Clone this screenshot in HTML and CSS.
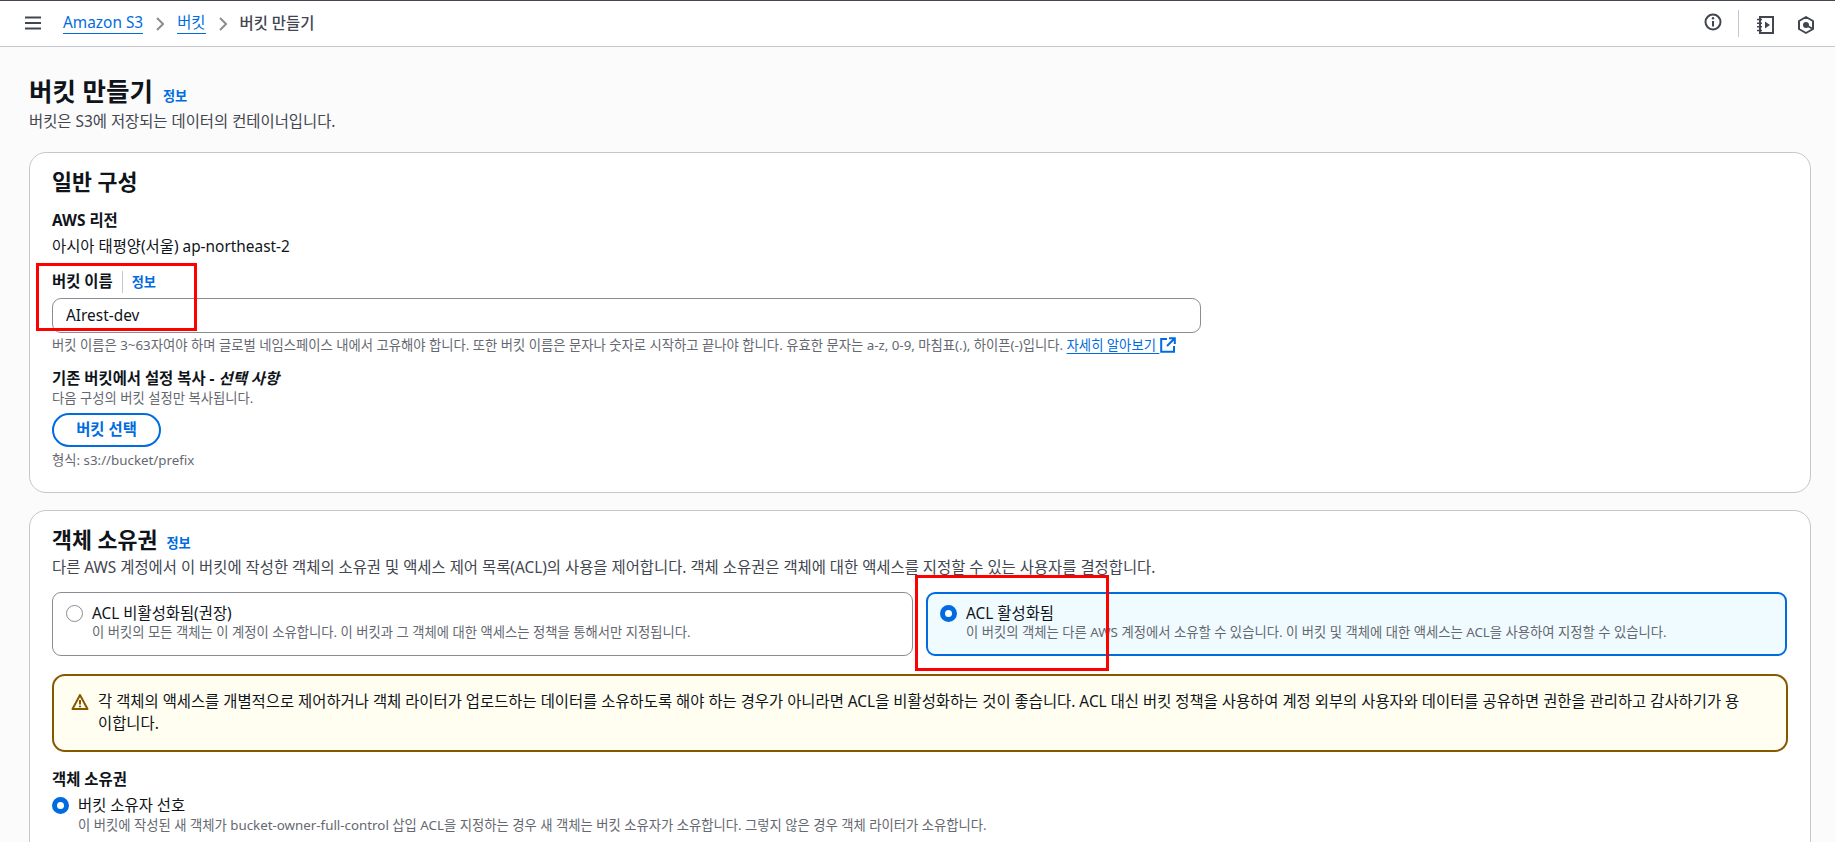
FILE: index.html
```html
<!DOCTYPE html>
<html lang="ko">
<head>
<meta charset="utf-8">
<title>버킷 만들기</title>
<link rel="stylesheet" href="styles.css">
</head>
<body>
<header class="topbar">
  <svg class="menu" width="16" height="14" viewBox="0 0 16 14"><path d="M0 1.5h16M0 7h16M0 12.5h16" stroke="#424650" stroke-width="2" fill="none"/></svg>
  <nav class="crumbs">
    <a class="link" href="#">Amazon S3</a>
    <svg class="chev" width="8" height="14" viewBox="0 0 8 14"><path d="M1 1l6 6-6 6" stroke="#8c8c94" stroke-width="2" fill="none"/></svg>
    <a class="link" href="#">버킷</a>
    <svg class="chev" width="8" height="14" viewBox="0 0 8 14"><path d="M1 1l6 6-6 6" stroke="#8c8c94" stroke-width="2" fill="none"/></svg>
    <span class="current">버킷 만들기</span>
  </nav>
  <div class="tools">
    <svg class="tool-info" width="18" height="18" viewBox="0 0 18 18"><circle cx="9" cy="9" r="7.5" stroke="#424650" stroke-width="2" fill="none"/><path d="M9 8v5.5" stroke="#424650" stroke-width="2"/><circle cx="9" cy="5.3" r="1.2" fill="#424650"/></svg>
    <span class="tool-sep"></span>
    <svg class="tool-book" width="18" height="18" viewBox="0 0 18 18"><path d="M4 1h13v16H4z" stroke="#424650" stroke-width="2" fill="none"/><path d="M1 3.5h5M1 7.2h5M1 10.8h5M1 14.5h5" stroke="#424650" stroke-width="1.6"/><path d="M9 5.5l5 3.5-5 3.5z" fill="#424650"/></svg>
    <svg class="tool-hex" width="16" height="18" viewBox="0 0 16 18"><path d="M8 1l7 4v8l-7 4-7-4V5z" stroke="#424650" stroke-width="2" stroke-linejoin="round" fill="none"/><circle cx="8" cy="9" r="3" fill="#424650"/><path d="M8 9l6 3.5" stroke="#424650" stroke-width="2"/></svg>
  </div>
</header>

<main class="page">
  <div class="title-row">
    <h1 class="page-title">버킷 만들기</h1>
    <a class="info" href="#">정보</a>
  </div>
  <p class="page-desc">버킷은 S3에 저장되는 데이터의 컨테이너입니다.</p>

  <section class="card card-general">
    <h2 class="card-title">일반 구성</h2>
    <div class="label label-region">AWS 리전</div>
    <div class="value">아시아 태평양(서울) ap-northeast-2</div>
    <div class="label-row">
      <span class="label">버킷 이름</span>
      <span class="label-sep"></span>
      <a class="info" href="#">정보</a>
    </div>
    <input class="text-input" type="text" value="AIrest-dev">
    <p class="hint hint-name">버킷 이름은 3~63자여야 하며 글로벌 네임스페이스 내에서 고유해야 합니다. 또한 버킷 이름은 문자나 숫자로 시작하고 끝나야 합니다. 유효한 문자는 a-z, 0-9, 마침표(.), 하이픈(-)입니다. <a class="link" href="#">자세히 알아보기 </a><svg class="ext" width="16" height="16" viewBox="0 0 16 16"><path d="M7 2H1.2v12.8H14V9" stroke="#006ce0" stroke-width="2" fill="none"/><path d="M7 9l7-7M9 1.2h5.8V7" stroke="#006ce0" stroke-width="2" fill="none"/></svg></p>
    <div class="label label-copy">기존 버킷에서 설정 복사 - <em>선택 사항</em></div>
    <p class="hint hint-copy">다음 구성의 버킷 설정만 복사됩니다.</p>
    <button class="btn" type="button">버킷 선택</button>
    <p class="hint hint-format">형식: s3://bucket/prefix</p>
  </section>

  <section class="card card-owner">
    <div class="title-row-small">
      <h2 class="card-title">객체 소유권</h2>
      <a class="info" href="#">정보</a>
    </div>
    <p class="card-desc">다른 AWS 계정에서 이 버킷에 작성한 객체의 소유권 및 액세스 제어 목록(ACL)의 사용을 제어합니다. 객체 소유권은 객체에 대한 액세스를 지정할 수 있는 사용자를 결정합니다.</p>
    <div class="tiles">
      <div class="tile">
        <span class="radio"></span>
        <div>
          <div class="tile-name">ACL 비활성화됨(권장)</div>
          <div class="tile-desc">이 버킷의 모든 객체는 이 계정이 소유합니다. 이 버킷과 그 객체에 대한 액세스는 정책을 통해서만 지정됩니다.</div>
        </div>
      </div>
      <div class="tile tile-on">
        <span class="radio radio-on"></span>
        <div>
          <div class="tile-name">ACL 활성화됨</div>
          <div class="tile-desc">이 버킷의 객체는 다른 AWS 계정에서 소유할 수 있습니다. 이 버킷 및 객체에 대한 액세스는 ACL을 사용하여 지정할 수 있습니다.</div>
        </div>
      </div>
    </div>
    <div class="alert">
      <svg class="alert-icon" width="18" height="18" viewBox="0 0 18 18"><path d="M9 2L1.5 16h15z" stroke="#855900" stroke-width="2" stroke-linejoin="round" fill="none"/><path d="M9 7v4.5" stroke="#855900" stroke-width="2"/><circle cx="9" cy="13.5" r="1.1" fill="#855900"/></svg>
      <p class="alert-text">각 객체의 액세스를 개별적으로 제어하거나 객체 라이터가 업로드하는 데이터를 소유하도록 해야 하는 경우가 아니라면 ACL을 비활성화하는 것이 좋습니다. ACL 대신 버킷 정책을 사용하여 계정 외부의 사용자와 데이터를 공유하면 권한을 관리하고 감사하기가 용이합니다.</p>
    </div>
    <div class="label label-owner">객체 소유권</div>
    <div class="option">
      <span class="radio radio-on"></span>
      <div>
        <div class="tile-name">버킷 소유자 선호</div>
        <div class="tile-desc">이 버킷에 작성된 새 객체가 bucket-owner-full-control 삽입 ACL을 지정하는 경우 새 객체는 버킷 소유자가 소유합니다. 그렇지 않은 경우 객체 라이터가 소유합니다.</div>
      </div>
    </div>
  </section>
</main>

<div class="mark mark-name"></div>
<div class="mark mark-acl"></div>
</body>
</html>
```

FILE: styles.css
```css
* { box-sizing: border-box; }
html, body { margin: 0; height: 842px; overflow: hidden; }
body {
  background: #fbfbfb;
  color: #0f141a;
  font-family: "Noto Sans", "Noto Sans CJK KR", sans-serif;
  font-size: 15.4px;
  line-height: 22px;
}
p, h1, h2 { margin: 0; }
.link { color: #006ce0; text-decoration: underline; text-underline-offset: 4px; }
.topbar {
  height: 47px;
  display: flex;
  align-items: center;
  background: #fff;
  border-top: 1px solid #414750;
  border-bottom: 1px solid #c6c6cd;
  padding: 0 21px 0 25px;
}
.menu { margin: -2px 22px 0 0; }
.crumbs { display: flex; align-items: center; gap: 13px; color: #424650; }
.chev { display: block; }
.crumbs .link { text-decoration: none; border-bottom: 1px solid #006ce0; line-height: 20px; }
.current { font-weight: 500; }
.tools { margin-left: auto; display: flex; align-items: center; }
.tool-sep { width: 1px; height: 27px; background: #c6c6cd; margin: 0 17px 0 16px; }
.tool-info { margin-top: -3px; }
.tool-book { margin: 3px 24px 0 0; }
.tool-hex { margin-top: 3px; }

.page { padding: 28px 24px 0 29px; }
.title-row { display: flex; align-items: baseline; gap: 10px; height: 33px; }
.page-title { font-size: 25.5px; line-height: 33px; font-weight: 700; }
.info { color: #006ce0; font-size: 13.2px; line-height: 18px; font-weight: 700; text-decoration: none; }
.page-desc { color: #424650; margin-top: 3px; }

.card { background: #fff; border: 1px solid #c6c6cd; border-radius: 17px; padding: 12px 22px 0; }
.card-general { height: 341px; margin-top: 19px; }
.card-owner { height: 400px; margin-top: 17px; }
.card-title { font-size: 21.7px; line-height: 33px; font-weight: 700; }
.label { font-weight: 700; line-height: 22px; }
.label-region { margin-top: 12px; }
.value { margin-top: 4px; }
.label-row { display: flex; align-items: center; margin-top: 13px; height: 22px; }
.label-sep { width: 1px; height: 22px; background: #c6c6cd; margin: 0 9px; }
.text-input {
  display: block;
  width: 1149px;
  height: 35px;
  margin-top: 5px;
  padding: 0 13px;
  border: 1px solid #8c8c94;
  border-radius: 9px;
  background: #fff;
  color: #0f141a;
  font: inherit;
}
.hint { color: #656871; font-size: 13.33px; line-height: 18px; }
.hint-name { margin-top: 3px; }
.hint-name .link { text-underline-offset: 3px; }
.ext { vertical-align: -3px; margin-left: 1px; }
.label-copy { margin-top: 14px; }
.label-copy em { font-style: italic; }
.hint-copy { margin-top: -1px; }
.btn {
  display: block;
  width: 109px;
  height: 34px;
  margin-top: 6px;
  background: #fff;
  border: 2px solid #006ce0;
  border-radius: 20px;
  color: #006ce0;
  font: inherit;
  font-weight: 700;
  padding: 0;
}
.hint-format { margin-top: 4px; }

.title-row-small { display: flex; align-items: baseline; gap: 9px; }
.card-desc { color: #424650; margin-top: 1px; }
.tiles { display: grid; grid-template-columns: 861px 861px; gap: 13px; margin-top: 13px; }
.tile {
  height: 64px;
  display: flex;
  gap: 9px;
  padding: 10px 13px 8px;
  background: #fff;
  border: 1px solid #8c8c94;
  border-radius: 9px;
}
.tile-on { background: #f0fbff; border: 2px solid #006ce0; padding: 9px 12px 7px; }
.radio { flex: none; width: 17px; height: 17px; margin-top: 2px; border: 1px solid #8c8c94; border-radius: 50%; background: #fff; }
.radio-on { border: 5px solid #006ce0; }
.tile-name { line-height: 22px; }
.tile-desc { color: #656871; font-size: 13.33px; line-height: 18px; margin-top: -2px; }
.alert {
  display: flex;
  gap: 9px;
  height: 78px;
  margin-top: 18px;
  padding: 15px 38px 13px 17px;
  background: #fffef0;
  border: 2px solid #855900;
  border-radius: 13px;
}
.alert-icon { flex: none; margin-top: 2px; }
.label-owner { margin-top: 17px; }
.option { display: flex; gap: 9px; margin-top: 4px; }
.option .radio { margin-top: 2px; }
.option .tile-desc { margin-top: -1px; }

.mark { position: absolute; border: 3px solid #f00; pointer-events: none; }
.mark-name { left: 36px; top: 263px; width: 161px; height: 68px; }
.mark-acl { left: 915px; top: 575px; width: 194px; height: 96px; }
```
